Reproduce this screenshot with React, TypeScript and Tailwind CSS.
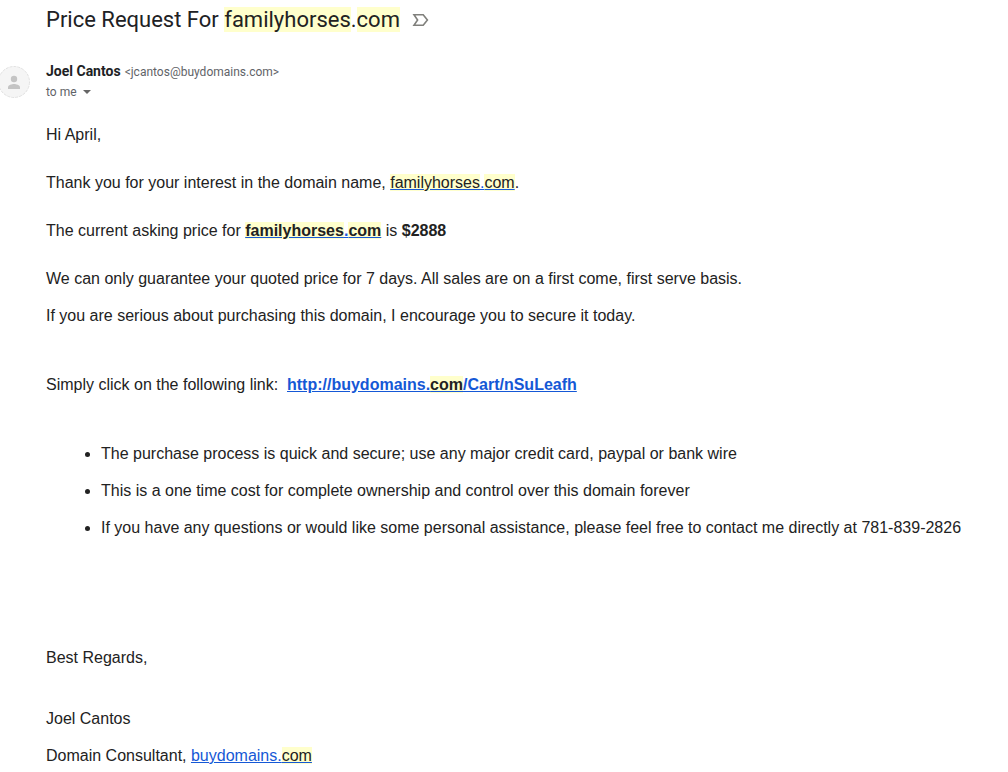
import React from "react";

interface MarkProps {
    children: React.ReactNode;
}

const Mark: React.FC<MarkProps> = ({ children }) => {
    return <mark className="bg-[#ffffcc] text-[#222222]">{children}</mark>;
};

const terms = [
    'The purchase process is quick and secure; use any major credit card, paypal or bank wire',
    'This is a one time cost for complete ownership and control over this domain forever',
    'If you have any questions or would like some personal assistance, please feel free to contact me directly at 781-839-2826',
];

export default function App() {
    return (
        <div className="bg-white text-[#222222] font-['Liberation_Sans',Arial,sans-serif]">
            {/* Subject */}
            <header className="flex items-center gap-3 pl-[46px] pt-1.5">
                <h1 className="text-[22px] leading-7 text-[#202124] font-['Roboto',sans-serif]">
                    Price Request For <Mark>familyhorses</Mark>.<Mark>com</Mark>
                </h1>
                <button type="button" aria-label="Mark as important">
                    <svg width="18" height="14" viewBox="0 0 18 14" fill="none" stroke="#80807c" strokeWidth="1.6">
                        <path d="M2 1.8H11.2L15.4 7L11.2 12.2H2L5.6 7Z" />
                    </svg>
                </button>
            </header>

            {/* Sender */}
            <div className="mt-[27px] flex items-start gap-4 font-['Roboto',sans-serif]">
                <svg className="mt-[5px] shrink-0" width="30" height="32" viewBox="0 0 30 32">
                    <circle cx="14" cy="16" r="15.5" fill="#f5f5f5" stroke="#e2e2e2" strokeDasharray="3 1" />
                    <circle cx="14" cy="13" r="3.2" fill="#c4c4c4" />
                    <path d="M8 23V21.4C8 19 12 18 14 18S20 19 20 21.4V23Z" fill="#c4c4c4" />
                </svg>
                <div className="text-xs leading-5 text-[#5f6368]">
                    <div className="flex items-baseline gap-1">
                        <span className="text-sm leading-5 font-bold text-[#202124]">Joel Cantos</span>
                        <span>&lt;jcantos@buydomains.com&gt;</span>
                    </div>
                    <button type="button" className="flex items-center gap-1.5">
                        to me
                        <svg width="8" height="4" viewBox="0 0 8 4" fill="#666666">
                            <path d="M0 0H8L4 4Z" />
                        </svg>
                    </button>
                </div>
            </div>

            {/* Message */}
            <div className="mt-[22px] pl-[46px] text-base leading-[21px]">
                <p>Hi April,</p>
                <p className="mt-[27px]">
                    Thank you for your interest in the domain name,{' '}
                    <a href="#" className="text-[#1558d6] underline"><Mark>familyhorses</Mark>.<Mark>com</Mark></a>.
                </p>
                <p className="mt-[27px]">
                    The current asking price for{' '}
                    <a href="#" className="font-bold text-[#1558d6] underline"><Mark>familyhorses</Mark>.<Mark>com</Mark></a>
                    {' '}is <b>$2888</b>
                </p>
                <p className="mt-[27px]">We can only guarantee your quoted price for 7 days. All sales are on a first come, first serve basis.</p>
                <p className="mt-4">If you are serious about purchasing this domain, I encourage you to secure it today.</p>
                <p className="mt-12">
                    Simply click on the following link:&nbsp;{' '}
                    <a href="#" className="font-bold text-[#1558d6] underline">http://buydomains.<Mark>com</Mark>/Cart/nSuLeafh</a>
                </p>
                <ul className="mt-12 list-disc space-y-4 pl-[55px]">
                    {terms.map((term) => (
                        <li key={term}>{term}</li>
                    ))}
                </ul>
                <p className="mt-[109px]">Best Regards,</p>
                <p className="mt-10">Joel Cantos</p>
                <p className="mt-4">
                    Domain Consultant,{' '}
                    <a href="#" className="text-[#1558d6] underline">buydomains.<Mark>com</Mark></a>
                </p>
            </div>
        </div>
    );
}
